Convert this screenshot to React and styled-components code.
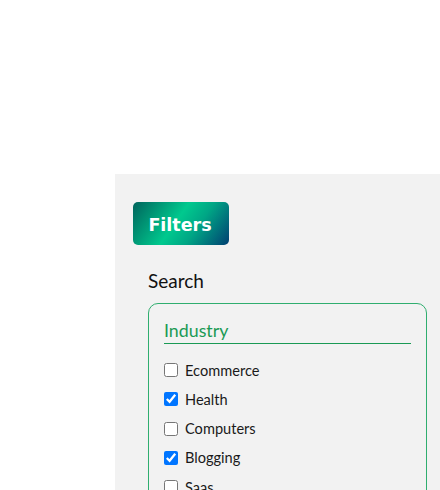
import React, { useState } from "react";
import styled, { createGlobalStyle } from "styled-components";

const GlobalStyle = createGlobalStyle`
  html, body {
    margin: 0;
    padding: 0;
    background: #ffffff;
    font-family: Lato, "Noto Sans", sans-serif;
  }
`;

const industries = [
  { name: "Ecommerce", checked: false },
  { name: "Health", checked: true },
  { name: "Computers", checked: false },
  { name: "Blogging", checked: true },
  { name: "Saas", checked: false },
];

const App = () => {
  const [items, setItems] = useState(industries);

  const toggle = (name) => {
    setItems((prev) =>
      prev.map((i) => (i.name === name ? { ...i, checked: !i.checked } : i))
    );
  };

  return (
    <>
      <GlobalStyle />
      <Page>
        <Sidebar>
          <FilterButton>Filters</FilterButton>
          <SearchSection>
            <SearchTitle>Search</SearchTitle>
            <FilterBox>
              <GroupTitle>Industry</GroupTitle>
              <OptionList>
                {items.map((item) => (
                  <Option key={item.name}>
                    <input
                      type="checkbox"
                      checked={item.checked}
                      onChange={() => toggle(item.name)}
                    />
                    <span>{item.name}</span>
                  </Option>
                ))}
              </OptionList>
            </FilterBox>
          </SearchSection>
        </Sidebar>
      </Page>
    </>
  );
};

const Page = styled.div`
  height: 490px;
  overflow: hidden;
  padding: 174px 0 0 115px;
  box-sizing: border-box;
`;

const Sidebar = styled.aside`
  background: #f2f2f2;
  min-height: 400px;
  padding: 28px 13px 0 18px;
`;

const FilterButton = styled.button`
  width: 96px;
  height: 43px;
  border: none;
  border-radius: 5px;
  background: linear-gradient(
    125deg,
    #00645c 0%,
    #00c98e 45%,
    #00a685 65%,
    #013f72 100%
  );
  color: #fff;
  font-family: "DejaVu Sans", sans-serif;
  font-weight: bold;
  font-size: 17.5px;
  padding: 3px 2px 0 0;
  cursor: pointer;
`;

const SearchSection = styled.div`
  padding-left: 15px;
  margin-top: 25px;
`;

const SearchTitle = styled.h3`
  margin: 0 0 11px;
  font-weight: 400;
  font-size: 19px;
  line-height: 22px;
  color: #111;
`;

const FilterBox = styled.div`
  border: 1px solid #2fae6f;
  border-radius: 10px;
  padding: 15px 15px 0 15px;
  min-height: 220px;
`;

const GroupTitle = styled.h4`
  margin: 0;
  font-weight: 400;
  font-size: 17.8px;
  line-height: 22px;
  color: #1a9a55;
  border-bottom: 1.5px solid #1a9a55;
  padding-bottom: 2px;
`;

const OptionList = styled.div`
  display: flex;
  flex-direction: column;
  gap: 9.3px;
  margin-top: 16px;
`;

const Option = styled.label`
  display: flex;
  align-items: center;
  gap: 7px;
  height: 20px;
  font-size: 14.6px;
  color: #1a1a1a;
  cursor: pointer;

  input {
    margin: 0;
    width: 14px;
    height: 14px;
  }
`;

export default App;
